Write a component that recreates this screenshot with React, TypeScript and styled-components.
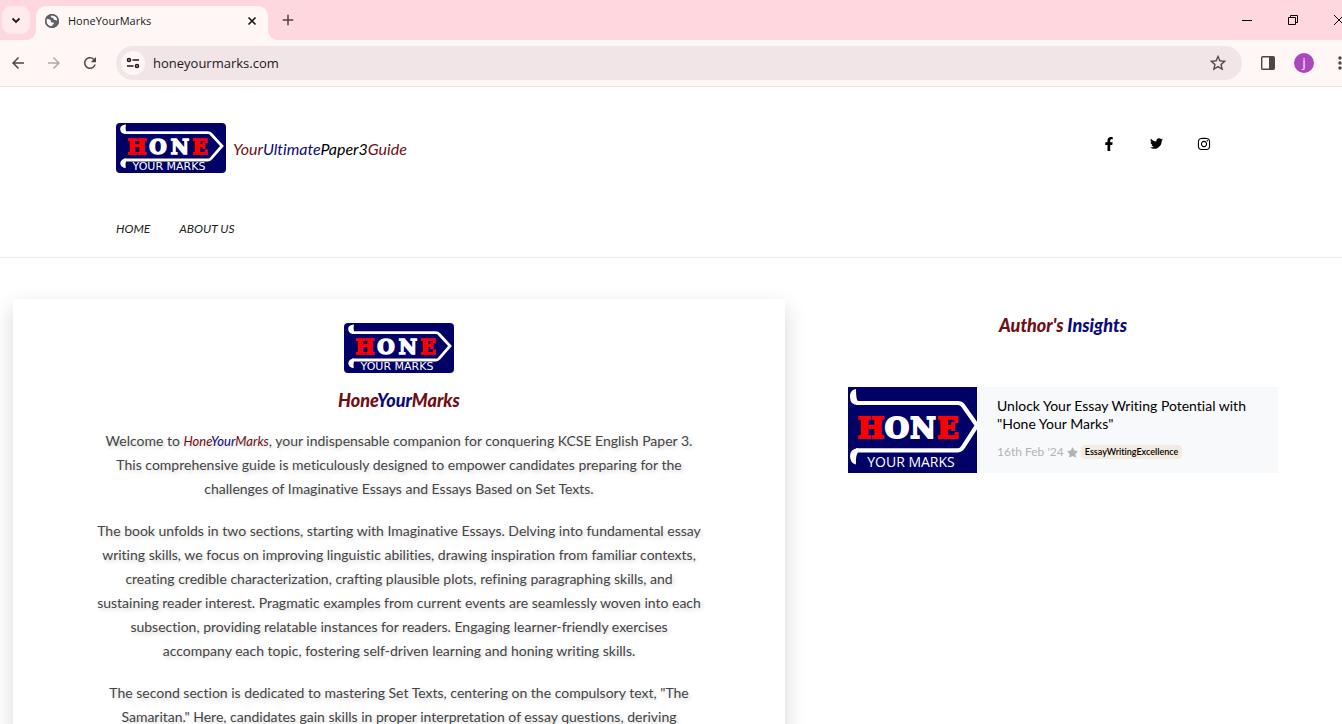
import React from "react";
import styled, { createGlobalStyle } from "styled-components";
import { FaFacebookF, FaTwitter, FaInstagram, FaStar } from "react-icons/fa";
import { MdArrowBack, MdArrowForward, MdRefresh, MdStarBorder, MdAdd, MdMoreVert } from "react-icons/md";

const maroon = "#6f1016";
const navy = "#0b0b78";
const display = `Lato, "Liberation Sans", sans-serif`;

const GlobalStyle = createGlobalStyle`
  *, *::before, *::after { box-sizing: border-box; font-variant-ligatures: none !important; }
  body { margin: 0; background: #fff; font-family: Lato, "Liberation Sans", sans-serif; }
  button { border: 0; padding: 0; background: none; color: inherit; font: inherit; cursor: pointer; }
  a { color: inherit; text-decoration: none; }
  h1, h2, h3, p { margin: 0; }
`;

const Browser = styled.div`
  height: 100vh;
  overflow: hidden;
  display: flex;
  flex-direction: column;
`;

const TabStrip = styled.div`
  flex: none;
  display: flex;
  align-items: flex-end;
  height: 40px;
  margin-right: -20px;
  background: #ffd7de;
`;

const TabSearch = styled.button`
  display: grid;
  place-items: center;
  align-self: center;
  width: 28px;
  height: 28px;
  margin: 0 6px 0 2px;
  border-radius: 9px;
  background: #ffebee;
  color: #201a1b;
`;

const Tab = styled.div`
  position: relative;
  display: flex;
  align-items: center;
  gap: 8px;
  width: 232px;
  height: 34px;
  padding: 0 8px 4px;
  border-radius: 10px 10px 0 0;
  background: #fff7f5;
  color: #201a1b;
  font: 11px/20px "Open Sans", "Noto Sans", sans-serif;
  &::before, &::after {
    content: "";
    position: absolute;
    bottom: 0;
    width: 10px;
    height: 10px;
  }
  &::before { right: 100%; background: radial-gradient(circle at 0 0, transparent 10px, #fff7f5 10px); }
  &::after { left: 100%; background: radial-gradient(circle at 100% 0, transparent 10px, #fff7f5 10px); }
`;

const TabTitle = styled.span`
  flex: 1;
`;

const IconButton = styled.button<{ $size?: number; $color?: string }>`
  flex: none;
  display: grid;
  place-items: center;
  width: ${(p) => p.$size ?? 36}px;
  height: ${(p) => p.$size ?? 36}px;
  color: ${(p) => p.$color ?? "#524345"};
`;

const NewTab = styled(IconButton)`
  margin-left: 2px;
  align-self: center;
`;

const WindowControls = styled.div`
  display: flex;
  margin-left: auto;
  align-self: stretch;
`;

const WindowButton = styled.button`
  display: grid;
  place-items: center;
  width: 46px;
  height: 40px;
  color: #000;
`;

const Toolbar = styled.div`
  flex: none;
  display: flex;
  align-items: center;
  height: 47px;
  margin-right: -16px;
  background: #fff7f5;
  border-bottom: 1px solid #f1dadd;
`;

const AddressBar = styled.div`
  flex: 1;
  display: flex;
  align-items: center;
  height: 34px;
  margin: 0 8px;
  padding: 0 6px 0 5px;
  border-radius: 17px;
  background: #f1e5e8;
`;

const SiteInfo = styled.button`
  display: grid;
  place-items: center;
  width: 24px;
  height: 24px;
  border-radius: 50%;
  background: #fff7f5;
  color: #201a1b;
`;

const UrlInput = styled.input`
  flex: 1;
  min-width: 0;
  padding: 0 8px;
  border: 0;
  outline: 0;
  background: none;
  color: #201a1b;
  font: 13px/20px "Open Sans", "Noto Sans", sans-serif;
`;

const Avatar = styled.button`
  width: 20px;
  height: 20px;
  margin: 0 8px;
  border-radius: 50%;
  background: #ab47bc;
  color: #fff;
  font: 12px/18px "Open Sans", sans-serif;
`;

const Viewport = styled.div`
  flex: 1;
  min-height: 0;
  overflow: hidden;
  background: #fff;
`;

const SiteHeader = styled.header`
  border-bottom: 1px solid #eaeaea;
`;

const HeaderInner = styled.div`
  max-width: 1110px;
  margin: 0 auto;
  padding-top: 36px;
`;

const HeaderTop = styled.div`
  display: flex;
  justify-content: space-between;
`;

const Brand = styled.a`
  display: flex;
  align-items: center;
  gap: 7px;
`;

const Tagline = styled.span`
  padding-top: 2px;
  font: italic 16px/24px ${display};
`;

const Tint = styled.span<{ $color: string }>`
  color: ${(p) => p.$color};
`;

const Social = styled.nav`
  display: flex;
  gap: 34px;
  padding: 14px 15px 0 0;
  height: 28px;
  a { display: block; height: 14px; }
  svg { display: block; }
`;

const MainNav = styled.nav`
  display: flex;
  gap: 29px;
  padding: 46px 0 18px;
  color: #222;
  font: italic 12px/20px ${display};
  text-transform: uppercase;
`;

const Columns = styled.main`
  display: grid;
  grid-template-columns: 772fr 430fr;
  column-gap: 63px;
  align-items: start;
  padding: 41px 64px 48px 13px;
`;

const BookCard = styled.article`
  display: flex;
  flex-direction: column;
  align-items: center;
  padding: 24px 82px 48px;
  background: #fff;
  box-shadow: 0 8px 20px rgba(0, 0, 0, 0.16);
  text-align: center;
`;

const BookTitle = styled.h1`
  margin: 13px 0 15px;
  font: italic 900 18px/28px ${display};
`;

const Paragraph = styled.p`
  margin-bottom: 18px;
  color: #444;
  font: 400 14px/24px ${display};
  text-shadow: 2px 2px 4px rgba(0, 0, 0, 0.2);
`;

const InlineBrand = styled.i`
  font-size: 13px;
`;

const Sidebar = styled.aside``;

const SideTitle = styled.h2`
  margin: 13px 0 48px;
  font: italic 900 18px/27px ${display};
  text-align: center;
`;

const PostCard = styled.a`
  display: flex;
  background: #f8f9fb;
`;

const PostBody = styled.div`
  padding: 10px 20px 0;
`;

const PostTitle = styled.h3`
  color: #000;
  font: 400 14px/18px ${display};
`;

const PostMeta = styled.div`
  display: flex;
  align-items: center;
  gap: 3px;
  margin-top: 9px;
  color: #b3b3b3;
  font: 12px/20px ${display};
`;

const Tag = styled.span`
  padding: 0 4px;
  border-radius: 4px;
  background: #f4ebe0;
  color: #000;
  font: 600 9px/14px ${display};
`;

const LogoSvg = styled.svg<{ $radius: number }>`
  flex: none;
  display: block;
  border-radius: ${(p) => p.$radius}px;
`;

const letters = ["H", "O", "N", "E"];

function Logo() {
  const centers = [21, 42, 64, 84];
  return (
    <LogoSvg $radius={4} width="110" height="50" viewBox="0 0 110 50" role="img" aria-label="Hone Your Marks">
      <rect width="110" height="50" fill="#000066" />
      <path d="M8 9.700H92Q94 9.700 95 11L106 23L95 35.500Q94 37 92 37H8" fill="none" stroke="#fff" strokeWidth="2.800" />
      <path d="M10 1.500C5 2 4 4 4.300 7Q5 11 10 11V8Q9 6 10 1.500Z" fill="#fff" />
      <path d="M10 35.600Q5 36 4.300 40Q4 44 9.700 45.300Q9 41 10 38.500Z" fill="#fff" />
      {letters.map((c, i) => (
        <text key={c} x={centers[i]} y="31" textAnchor="middle" fontFamily="DejaVu Serif" fontWeight="700" fontSize="20"
          fill={i % 3 ? "#fff" : "#f00"} stroke={i % 3 ? "#fff" : "#f00"} strokeWidth="1.600">{c}</text>
      ))}
      <text x="53" y="47" textAnchor="middle" fontFamily="DejaVu Sans" fontSize="11" fill="#fff">YOUR MARKS</text>
    </LogoSvg>
  );
}

function LogoCover() {
  const centers = [23, 49, 75, 100];
  return (
    <LogoSvg $radius={0} width="129" height="86" viewBox="0 0 129 86" role="img" aria-label="Hone Your Marks">
      <rect width="129" height="86" fill="#000066" />
      <path d="M8 16H110Q113 16 115 18.500L129 38.500L115 60Q113 63.300 110 63.300H8" fill="none" stroke="#fff" strokeWidth="4.200" />
      <path d="M8 2C3 3 2 6 2 10Q2 18 10 18V14Q8 13 8 2Z" fill="#fff" />
      <path d="M10 61.200Q2 62 2 69Q2 76 8 77.500Q7.500 68 10 65.400Z" fill="#fff" />
      {letters.map((c, i) => (
        <text key={c} x={centers[i]} y="51" textAnchor="middle" fontFamily="DejaVu Serif" fontWeight="700" fontSize="28"
          fill={i % 3 ? "#fff" : "#f00"} stroke={i % 3 ? "#fff" : "#f00"} strokeWidth="2">{c}</text>
      ))}
      <text x="63" y="80" textAnchor="middle" fontFamily="Open Sans" fontSize="14" fill="#fff">YOUR MARKS</text>
    </LogoSvg>
  );
}

const GlobeIcon = () => (
  <svg width="16" height="16" viewBox="0 0 16 16" aria-hidden="true">
    <circle cx="8" cy="8" r="7" fill="#5f6368" />
    <path d="M2.300 5.500C4 6.500 5.500 6 6.500 7S6 9.500 8.500 9.500C10 9.500 10.500 10 9.500 11L7.500 13.200C5 13.400 2.300 11 2.300 8Z" fill="#fff7f5" />
    <path d="M7.500 2.400C6.500 3.500 6.600 4.500 8 4.500S9.400 6.200 10.600 7C12 7.600 12.800 7 13.500 7.700C13.500 4.500 10.500 2 7.500 2.400Z" fill="#fff7f5" />
    <circle cx="8" cy="8" r="6.300" fill="none" stroke="#5f6368" strokeWidth="1.500" />
  </svg>
);

const ChevronIcon = () => (
  <svg width="10" height="10" viewBox="0 0 10 10" fill="none" stroke="currentColor" strokeWidth="1.800" aria-hidden="true">
    <path d="M1.500 3.500L5 7L8.500 3.500" />
  </svg>
);

const CloseIcon = () => (
  <svg width="10" height="10" viewBox="0 0 10 10" stroke="currentColor" strokeWidth="1.700" aria-hidden="true">
    <path d="M1.500 1.500L8.500 8.500M8.500 1.500L1.500 8.500" />
  </svg>
);

const TuneIcon = () => (
  <svg width="14" height="14" viewBox="0 0 14 14" fill="none" stroke="currentColor" strokeWidth="1.600" aria-hidden="true">
    <circle cx="3" cy="4" r="1.500" />
    <path d="M6.500 4H13M1 10H7.500" />
    <circle cx="11" cy="10" r="1.500" />
  </svg>
);

const PanelIcon = () => (
  <svg width="16" height="16" viewBox="0 0 16 16" aria-hidden="true">
    <rect x="1.700" y="1.700" width="12.600" height="12.600" rx="1" fill="none" stroke="currentColor" strokeWidth="1.400" />
    <path d="M9 2H14V14H9Z" fill="currentColor" />
  </svg>
);

export default function App() {
  return (
    <Browser>
      <GlobalStyle />
      <TabStrip>
        <TabSearch aria-label="Search tabs"><ChevronIcon /></TabSearch>
        <Tab>
          <GlobeIcon />
          <TabTitle>HoneYourMarks</TabTitle>
          <IconButton $size={16} $color="#201a1b" aria-label="Close tab"><CloseIcon /></IconButton>
        </Tab>
        <NewTab aria-label="New tab"><MdAdd size={18} /></NewTab>
        <WindowControls>
          <WindowButton aria-label="Minimize">
            <svg width="10" height="10" viewBox="0 0 10 10"><path d="M0 5.500H10" stroke="#000" /></svg>
          </WindowButton>
          <WindowButton aria-label="Restore">
            <svg width="10" height="10" viewBox="0 0 10 10" fill="none" stroke="#000"><path d="M.5 2.500H7.500V9.500H.5ZM2.500 2.500V.5H9.500V7.500H7.500" /></svg>
          </WindowButton>
          <WindowButton aria-label="Close">
            <svg width="10" height="10" viewBox="0 0 10 10"><path d="M0 0L10 10M10 0L0 10" stroke="#000" /></svg>
          </WindowButton>
        </WindowControls>
      </TabStrip>
      <Toolbar>
        <IconButton aria-label="Back"><MdArrowBack size={18} /></IconButton>
        <IconButton $color="#b5a6a8" aria-label="Forward"><MdArrowForward size={18} /></IconButton>
        <IconButton aria-label="Reload"><MdRefresh size={18} /></IconButton>
        <AddressBar>
          <SiteInfo aria-label="View site information"><TuneIcon /></SiteInfo>
          <UrlInput aria-label="Address" defaultValue="honeyourmarks.com" />
          <IconButton aria-label="Bookmark this tab"><MdStarBorder size={20} /></IconButton>
        </AddressBar>
        <IconButton aria-label="Side panel"><PanelIcon /></IconButton>
        <Avatar aria-label="Profile">j</Avatar>
        <IconButton aria-label="Menu"><MdMoreVert size={20} /></IconButton>
      </Toolbar>
      <Viewport>
        <SiteHeader>
          <HeaderInner>
            <HeaderTop>
              <Brand href="#home">
                <Logo />
                <Tagline>
                  <Tint $color={maroon}>Your</Tint><Tint $color={navy}>Ultimate</Tint><Tint $color="#000">Paper3</Tint><Tint $color={maroon}>Guide</Tint>
                </Tagline>
              </Brand>
              <Social aria-label="Social">
                <a href="#facebook" aria-label="Facebook"><FaFacebookF size={14} /></a>
                <a href="#twitter" aria-label="Twitter"><FaTwitter size={13} /></a>
                <a href="#instagram" aria-label="Instagram"><FaInstagram size={14} /></a>
              </Social>
            </HeaderTop>
            <MainNav>
              <a href="#home">Home</a>
              <a href="#about">About us</a>
            </MainNav>
          </HeaderInner>
        </SiteHeader>
        <Columns>
          <BookCard>
            <Logo />
            <BookTitle>
              <Tint $color={maroon}>Hone</Tint><Tint $color={navy}>Your</Tint><Tint $color={maroon}>Marks</Tint>
            </BookTitle>
            <Paragraph>
              Welcome to <InlineBrand><Tint $color={maroon}>Hone</Tint><Tint $color={navy}>Your</Tint><Tint $color={maroon}>Marks</Tint></InlineBrand>, your indispensable companion for conquering KCSE English Paper 3. This comprehensive guide is meticulously designed to empower candidates preparing for the challenges of Imaginative Essays and Essays Based on Set Texts.
            </Paragraph>
            <Paragraph>
              The book unfolds in two sections, starting with Imaginative Essays. Delving into fundamental essay writing skills, we focus on improving linguistic abilities, drawing inspiration from familiar contexts, creating credible characterization, crafting plausible plots, refining paragraphing skills, and sustaining reader interest. Pragmatic examples from current events are seamlessly woven into each subsection, providing relatable instances for readers. Engaging learner-friendly exercises accompany each topic, fostering self-driven learning and honing writing skills.
            </Paragraph>
            <Paragraph>
              The second section is dedicated to mastering Set Texts, centering on the compulsory text, "The Samaritan." Here, candidates gain skills in proper interpretation of essay questions, deriving
            </Paragraph>
          </BookCard>
          <Sidebar>
            <SideTitle><Tint $color={maroon}>Author's</Tint> <Tint $color={navy}>Insights</Tint></SideTitle>
            <PostCard href="#post">
              <LogoCover />
              <PostBody>
                <PostTitle>Unlock Your Essay Writing Potential with "Hone Your Marks"</PostTitle>
                <PostMeta>16th Feb '24 <FaStar size={11} /><Tag>EssayWritingExcellence</Tag></PostMeta>
              </PostBody>
            </PostCard>
          </Sidebar>
        </Columns>
      </Viewport>
    </Browser>
  );
}
